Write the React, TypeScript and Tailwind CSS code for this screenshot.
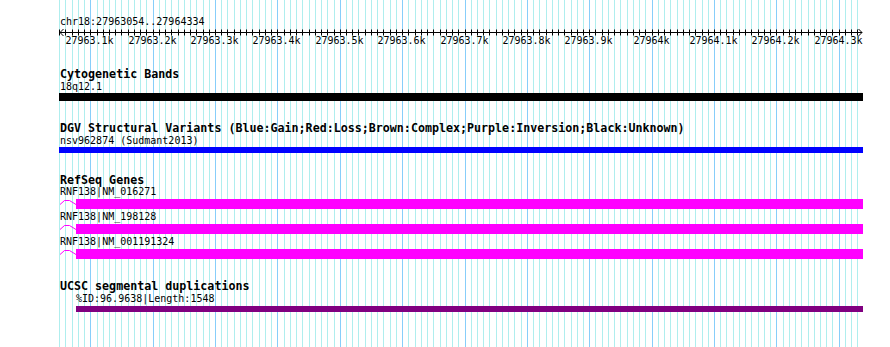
import React from 'react';

// grid: one line every 10 bp, a darker one every 100 bp
const GRID_START = 59.1;
const GRID_STEP = 6.237;
const gridLines = Array.from({ length: 129 }, (_, i) => ({
  x: Math.round(GRID_START + i * GRID_STEP) + 0.5,
  major: (i - 5) % 10 === 0,
}));

const rulerLabels = [
  '27963.1k', '27963.2k', '27963.3k', '27963.4k', '27963.5k', '27963.6k', '27963.7k',
  '27963.8k', '27963.9k', '27964k', '27964.1k', '27964.2k', '27964.3k',
];

function Grid() {
  return (
    <svg className="absolute inset-0" width={890} height={347}>
      {gridLines.map((l, i) => (
        <line key={i} x1={l.x} x2={l.x} y1={0} y2={347} stroke={l.major ? '#87cefa' : '#afeeee'} strokeWidth={1} />
      ))}
    </svg>
  );
}

function Ruler() {
  // local coords: x - 59
  return (
    <svg width={804} height={18} className="block">
      <line x1={1} x2={803} y1={4.5} y2={4.5} stroke="#000" strokeWidth={1} />
      <polyline points="4.5,1 1,4.5 4.5,8" fill="none" stroke="#000" strokeWidth={1} />
      <polyline points="799.5,1 803,4.5 799.5,8" fill="none" stroke="#000" strokeWidth={1} />
      {gridLines.map((l, i) => (
        <line key={i} x1={l.x - 59} x2={l.x - 59} y1={1.5} y2={7.5} stroke="#000" strokeWidth={1} />
      ))}
      {rulerLabels.map((t, k) => (
        <text
          key={t}
          x={gridLines[5 + k * 10].x - 59 - 1}
          y={16}
          textAnchor="middle"
          fontSize={10}
          fontFamily="'DejaVu Sans Mono', monospace"
          fill="#000"
        >
          {t}
        </text>
      ))}
    </svg>
  );
}

function Title({ children }: { children: React.ReactNode }) {
  return <div className="pl-px text-[11.67px] leading-[12px] font-bold whitespace-nowrap">{children}</div>;
}

function Label({ children, indent }: { children: React.ReactNode; indent?: boolean }) {
  return (
    <div className={`text-[10px] leading-[13px] whitespace-nowrap ${indent ? 'pl-[17px]' : 'pl-px'}`}>{children}</div>
  );
}

function GeneRow({ name, first }: { name: string; first?: boolean }) {
  return (
    <div className={first ? '' : 'mt-[2px]'}>
      <div className="h-[13px] pl-px text-[10px] leading-[12px] whitespace-nowrap">{name}</div>
      <div className="flex h-[10px]">
        <svg width={17} height={10} className="block shrink-0">
          <polyline points="1,5.5 5.5,1.5 10.5,1.5 17,5.5" fill="none" stroke="#ff00ff" strokeWidth={1} />
        </svg>
        <div className="flex-1 bg-[#ff00ff]" />
      </div>
    </div>
  );
}

export default function App() {
  return (
    <div className="relative w-[890px] h-[347px] bg-white overflow-hidden text-black font-['DejaVu_Sans_Mono',monospace]">
      <Grid />
      <div className="relative flex flex-col pl-[59px] w-[863px]">
        <div className="pt-[15px] pl-px text-[10px] leading-[13px]">chr18:27963054..27964334</div>
        <Ruler />

        <div className="mt-[22px]">
          <Title>Cytogenetic Bands</Title>
          <Label>18q12.1</Label>
          <div className="h-[8px] bg-black" />
        </div>

        <div className="mt-[21px]">
          <Title>DGV Structural Variants (Blue:Gain;Red:Loss;Brown:Complex;Purple:Inversion;Black:Unknown)</Title>
          <Label>nsv962874 (Sudmant2013)</Label>
          <div className="h-[6px] bg-[#0000ff]" />
        </div>

        <div className="mt-[21px]">
          <Title>RefSeq Genes</Title>
          <GeneRow name="RNF138|NM_016271" first />
          <GeneRow name="RNF138|NM_198128" />
          <GeneRow name="RNF138|NM_001191324" />
        </div>

        <div className="mt-[21px]">
          <Title>UCSC segmental duplications</Title>
          <Label indent>%ID:96.9638|Length:1548</Label>
          <div className="mt-px ml-[17px] h-[6px] bg-[#800080]" />
        </div>
      </div>
    </div>
  );
}
